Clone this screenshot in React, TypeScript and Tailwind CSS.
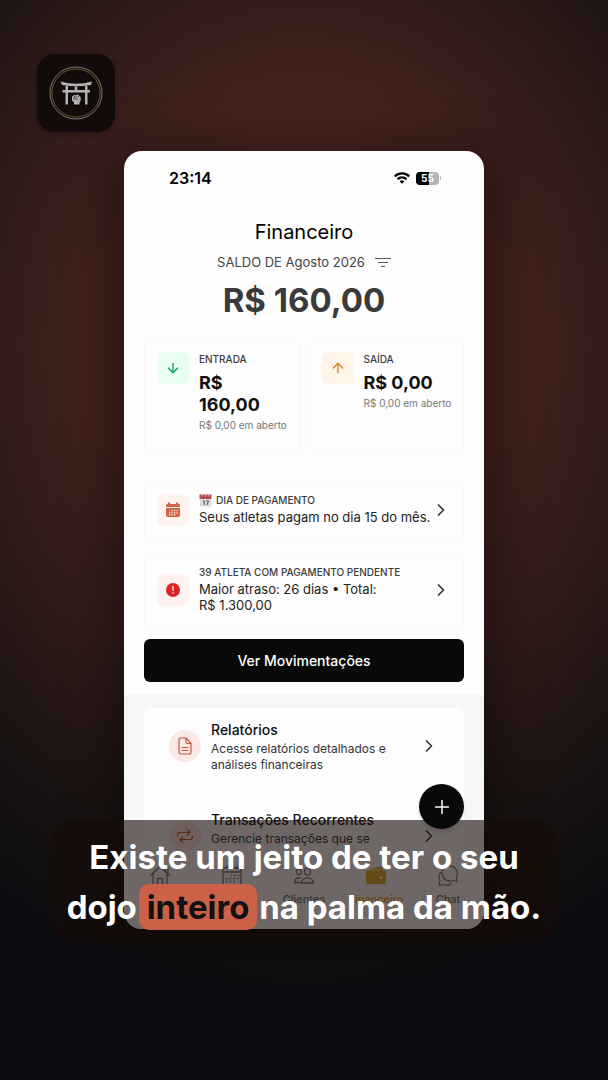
import type { ReactNode } from 'react'
import { ArrowDown, ArrowUp, ChevronRight, Plus } from 'lucide-react'

interface SummaryProps {
  label: string
  value: string
  pending: string
  tone: string
  icon: ReactNode
}

interface NoticeProps {
  label: ReactNode
  text: string
  tone: string
  icon: ReactNode
  spacing: string
}

interface LinkRowProps {
  title: string
  text: string
  icon: ReactNode
}

function Logo() {
  return (
    <svg viewBox="0 0 54 54" className="size-[54px]" fill="none" aria-hidden="true">
      <circle cx="27" cy="27" r="26" stroke="#857b7e" strokeWidth="1" />
      <circle cx="27" cy="27" r="24" stroke="#6b5426" strokeWidth="1" />
      <path d="M11.500 15.500Q27 20 43 15.500L42 19Q27 21.500 13 19Z" fill="#b5b0b1" />
      <path d="M13.500 24h27.500v2.500H13.500zM16.500 20H19v18.500h-2.500zM36 20h2.500v18.500H36zM25.700 20.500h2.600v4.500h-2.600z" fill="#b5b0b1" />
      <path d="M23 30.500 25 29h2l2-.5 1.500 1.500 1.200 1v3.500L30.500 36.500v2h-5.500v-2l-2-2z" fill="#b5b0b1" />
      <path d="M25.200 29.500v2.300M27.200 29.500v2M24 32.800h3.500l1.500 1.500M29.300 30v1.500" stroke="#120b09" strokeWidth=".7" />
    </svg>
  )
}

function WifiIcon() {
  return (
    <svg viewBox="0 0 16 12" className="h-3 w-4" fill="none" stroke="#000" strokeWidth="2.200" aria-hidden="true">
      <path d="M.8 4.400a10.300 10.300 0 0 1 14.400 0M3.500 7.300a6.400 6.400 0 0 1 9 0" />
      <path d="M8 11.800 5.700 9.400a3.300 3.300 0 0 1 4.600 0z" fill="#000" stroke="none" />
    </svg>
  )
}

function Battery() {
  return (
    <div className="flex items-center gap-px">
      <div className="flex h-[13px] w-[23px] items-center justify-center rounded-[4px] bg-linear-to-r from-black from-55% to-[#b5b5b5] to-55% text-[10px] leading-none font-bold text-white">
        55
      </div>
      <div className="h-1 w-px rounded-r bg-[#b5b5b5]" />
    </div>
  )
}

function CalendarSolid() {
  return (
    <svg viewBox="0 0 16 16" className="size-4" fill="#d0644a" aria-hidden="true">
      <path d="M3 .5h2V2h6V.5h2V2h.5A1.500 1.500 0 0 1 15 3.500V5H1V3.500A1.500 1.500 0 0 1 2.500 2H3zM1 6h14v7a2 2 0 0 1-2 2H3a2 2 0 0 1-2-2z" />
      <path d="M6.500 8h1.300v1.300H6.500zM9 8h1.300v1.300H9zM11.500 8h1.300v1.300h-1.300zM4 10.200h1.300v1.300H4zM6.500 10.200h1.300v1.300H6.500zM9 10.200h1.300v1.300H9zM11.500 10.200h1.300v1.300h-1.300zM4 12.300h1.300v1.300H4zM6.500 12.300h1.300v1.300H6.500zM9 12.300h1.300v1.300H9z" fill="#fff0ec" />
    </svg>
  )
}

function CalendarPage() {
  return (
    <svg viewBox="0 0 13 13" className="size-[13px]" aria-hidden="true">
      <path d="M1 1h11v11.500H1z" fill="#d9dadb" />
      <path d="M.5.5h12V5H.5z" fill="#b5494c" />
      <path d="M3 .5v2M6.500.5v2M10 .5v2" stroke="#ecd4d4" strokeWidth=".8" />
      <path d="M4 7h1.200v4M7 7h2.500L8 11" fill="none" stroke="#4a4a4a" strokeWidth="1" />
    </svg>
  )
}

function AlertSolid() {
  return (
    <svg viewBox="0 0 14 14" className="size-[14px]" aria-hidden="true">
      <circle cx="7" cy="7" r="7" fill="#dc2424" />
      <path d="M7 3.400v4" stroke="#fff" strokeWidth="1.200" strokeLinecap="round" />
      <circle cx="7" cy="10" r=".8" fill="#fff" />
    </svg>
  )
}

function ReportIcon() {
  return (
    <svg viewBox="0 0 14 18" className="h-[18px] w-[14px]" fill="none" stroke="#c4543c" strokeWidth="1.200" strokeLinecap="round" strokeLinejoin="round" aria-hidden="true">
      <path d="M3 1h5l5 5.500v8.500a2 2 0 0 1-2 2H3a2 2 0 0 1-2-2V3a2 2 0 0 1 2-2zM8 1v4a1.500 1.500 0 0 0 1.500 1.500H13M4 10.500h6M4 13.500h6" />
    </svg>
  )
}

function RepeatIcon() {
  return (
    <svg viewBox="0 0 18 14" className="h-[14px] w-[18px]" fill="none" stroke="#c4543c" strokeWidth="1.200" strokeLinecap="round" strokeLinejoin="round" aria-hidden="true">
      <path d="M1.500 7V6a2.500 2.500 0 0 1 2.500-2.500h10M11.500 1 14 3.500 11.500 6M16.500 7v1a2.500 2.500 0 0 1-2.500 2.500H4M6.500 8 4 10.500 6.500 13" />
    </svg>
  )
}

function HomeIcon() {
  return (
    <svg viewBox="0 0 22 22" className="size-[22px]" fill="none" stroke="currentColor" strokeWidth="1.300" strokeLinejoin="round" aria-hidden="true">
      <path d="M1 11 11 1.500 21 11M16.500 6.500V3H19v6M4 8.500V20.500h4.500V13.500h5v7H18V8.500" />
    </svg>
  )
}

function AgendaIcon() {
  return (
    <svg viewBox="0 0 22 22" className="size-[22px]" fill="none" stroke="currentColor" strokeWidth="1.300" aria-hidden="true">
      <path d="M2 3h18v18H2zM2 7h18M6 .5V3M16 .5V3" />
      <path d="M9.500 10.500h9M5 13.500h12.500M5 16.500h9" strokeWidth="1.600" strokeDasharray="1.600 2" />
    </svg>
  )
}

function PeopleIcon() {
  return (
    <svg viewBox="0 0 22 22" className="size-[22px]" fill="none" stroke="currentColor" strokeWidth="1.300" strokeLinejoin="round" aria-hidden="true">
      <ellipse cx="14.500" cy="6.500" rx="3" ry="3.600" />
      <ellipse cx="6" cy="7" rx="2.300" ry="2.800" />
      <path d="M8.500 18c0-6.500 12-6.500 12 0zM7.500 17.500H1.500c0-4 3-5.500 6.800-4.300" />
    </svg>
  )
}

function WalletIcon() {
  return (
    <svg viewBox="0 0 22 22" className="size-[22px]" fill="currentColor" aria-hidden="true">
      <path d="M2 4.500 15 1.800a2.500 2.500 0 0 1 3 2.200v.5H4z" />
      <path fillRule="evenodd" d="M3.500 5.300h15A2.500 2.500 0 0 1 21 7.800v9a2.500 2.500 0 0 1-2.500 2.500h-15A2.500 2.500 0 0 1 1 16.800v-9a2.500 2.500 0 0 1 2.500-2.500zM16 11a1.500 1.500 0 1 0 0 3 1.500 1.500 0 0 0 0-3z" />
    </svg>
  )
}

function ChatIcon() {
  return (
    <svg viewBox="0 0 22 22" className="size-[22px]" fill="none" stroke="currentColor" strokeWidth="1.200" strokeLinecap="round" strokeLinejoin="round" aria-hidden="true">
      <path d="M19.300 12.200A7.500 7.500 0 1 0 15.500 15.500l4.500.8z" />
      <path d="M3.800 7.500C1.800 9.800 1.500 13 3 15.500L2.200 20.300l4.600-.8c2.600 1.200 5.200.8 7.200-1" />
    </svg>
  )
}

function SummaryCard({ label, value, pending, tone, icon }: SummaryProps) {
  return (
    <div className="flex h-[116px] gap-[10px] rounded-md border border-[#f8f8f8] p-3">
      <div className={`flex size-8 shrink-0 items-center justify-center rounded-md ${tone}`}>{icon}</div>
      <div className="min-w-0">
        <div className="text-[10px] leading-[14px] font-medium text-[#3c3c3c]">{label}</div>
        <div className="mt-[6px] text-[18px] leading-[22px] font-bold text-[#111]">{value}</div>
        <div className="text-[10px] leading-[18px] whitespace-nowrap text-[#777]">{pending}</div>
      </div>
    </div>
  )
}

function Notice({ label, text, tone, icon, spacing }: NoticeProps) {
  return (
    <a href="#" className={`flex items-center rounded-md border border-[#f8f8f8] px-3 ${spacing}`}>
      <div className={`flex size-8 shrink-0 items-center justify-center rounded-md ${tone}`}>{icon}</div>
      <div className="ml-[10px] flex-1 pb-1">
        <div className="flex items-center gap-1 text-[10px] leading-[18px] font-medium whitespace-nowrap text-[#3c3c3c]">{label}</div>
        <div className="text-[13px] leading-4 text-[#222]">{text}</div>
      </div>
      <ChevronRight className="-ml-3 size-5 shrink-0 text-[#333]" strokeWidth={2} />
    </a>
  )
}

function LinkRow({ title, text, icon }: LinkRowProps) {
  return (
    <a href="#" className="flex h-[90px] items-start px-[25px]">
      <div className="mt-[22px] flex size-8 shrink-0 items-center justify-center rounded-full bg-[#fce8e4]">{icon}</div>
      <div className="mt-3 ml-[10px] w-[190px]">
        <div className="text-[14px] leading-5 font-medium text-[#111]">{title}</div>
        <div className="pt-px text-[12px] leading-4 text-[#333]">{text}</div>
      </div>
      <ChevronRight className="mt-7 ml-auto size-5 shrink-0 text-[#333]" strokeWidth={2} />
    </a>
  )
}

const tabs = [
  { name: 'Início', icon: <HomeIcon />, color: 'text-[#777]', label: '' },
  { name: 'Agenda', icon: <AgendaIcon />, color: 'text-[#777]', label: '' },
  { name: 'Clientes', icon: <PeopleIcon />, color: 'text-[#777]', label: 'Clientes' },
  { name: 'Financeiro', icon: <WalletIcon />, color: 'text-[#e2aa33]', label: 'Financeiro' },
  { name: 'Chat', icon: <ChatIcon />, color: 'text-[#777]', label: 'Chat' },
]

function Phone() {
  return (
    <main className="relative mx-auto mt-[19px] w-full max-w-[360px] overflow-hidden rounded-[18px] bg-[#fdfdfd] shadow-[0_8px_50px_10px_rgba(0,0,0,0.45)]">
      <header className="flex items-center justify-between pt-[17px] pr-[43px] pl-[45px]">
        <div className="text-[16px] leading-5 font-semibold text-black">23:14</div>
        <div className="flex items-center gap-[6px]">
          <WifiIcon />
          <Battery />
        </div>
      </header>

      <section className="px-5 pt-7 pb-[13px]">
        <h1 className="text-center text-[20px] leading-8 text-black">Financeiro</h1>
        <div className="flex items-center justify-center gap-[10px] text-[13px] leading-7 text-[#444]">
          SALDO DE Agosto 2026
          <button aria-label="Filtrar" className="flex">
            <svg viewBox="0 0 16 10" className="h-[10px] w-4" stroke="#555" strokeWidth="1.200" aria-hidden="true">
              <path d="M0 1.500h16M3 5.500h10M6 9.500h4" />
            </svg>
          </button>
        </div>
        <div className="text-center text-[33px] leading-[48px] font-bold text-[#3a3a3a]">R$ 160,00</div>

        <div className="mt-[15px] grid grid-cols-2 gap-[9px]">
          <SummaryCard
            label="ENTRADA"
            value="R$ 160,00"
            pending="R$ 0,00 em aberto"
            tone="bg-[#e9fdf2]"
            icon={<ArrowDown className="size-4 text-[#0f9f6e]" />}
          />
          <SummaryCard
            label="SAÍDA"
            value="R$ 0,00"
            pending="R$ 0,00 em aberto"
            tone="bg-[#fff4e8]"
            icon={<ArrowUp className="size-4 text-[#d5831a]" />}
          />
        </div>

        <div className="mt-[25px] grid gap-[13px]">
          <Notice
            label={<><CalendarPage />DIA DE PAGAMENTO</>}
            text="Seus atletas pagam no dia 15 do mês."
            tone="bg-[#fff3f0]"
            icon={<CalendarSolid />}
            spacing="h-[60px]"
          />
          <Notice
            label="39 ATLETA COM PAGAMENTO PENDENTE"
            text={'Maior atraso: 26 dias • Total: R$\u00a01.300,00'}
            tone="bg-[#fff1ef]"
            icon={<AlertSolid />}
            spacing="h-[74px]"
          />
        </div>

        <button className="mt-3 block h-[43px] w-full rounded-md bg-[#090909] text-[14px] font-medium text-white">
          Ver Movimentações
        </button>
      </section>

      <section className="bg-[#f6f6f6] px-5 pt-[13px]">
        <div className="h-[148px] overflow-hidden rounded-t-md bg-[#fdfdfd]">
          <LinkRow
            title="Relatórios"
            text="Acesse relatórios detalhados e análises financeiras"
            icon={<ReportIcon />}
          />
          <LinkRow title="Transações Recorrentes" text="Gerencie transações que se" icon={<RepeatIcon />} />
        </div>
      </section>

      <nav className="grid h-[73px] grid-cols-5 bg-[#fdfdfd] pt-[9px]">
        {tabs.map((tab) => (
          <a key={tab.name} href="#" aria-label={tab.name} className={`flex flex-col items-center ${tab.color}`}>
            {tab.icon}
            <span className="text-[11px] leading-6 font-medium">{tab.label}</span>
          </a>
        ))}
      </nav>
    </main>
  )
}

export default function App() {
  return (
    <div className="min-h-screen bg-[#0a0c10] bg-[radial-gradient(ellipse_92%_62%_at_50%_32%,#5c2c24_0%,#42221d_38%,#321c19_56%,#1d1413_76%,#0a0c10_100%)] px-[37px] pt-[54px] pb-[137px] font-[Inter,'Liberation_Sans',sans-serif]">
      <div className="flex size-[78px] items-center justify-center rounded-[18px] bg-[#120b0a] shadow-[0_2px_6px_rgba(0,0,0,0.3)]">
        <Logo />
      </div>

      <div className="relative">
        <Phone />
        <div className="absolute inset-x-[13px] -bottom-[14px] rounded-3xl bg-[#170b08]/62 pt-3 pb-[11px] text-center text-[33px] leading-[50px] font-bold whitespace-nowrap text-white">
          <p>Existe um jeito de ter o seu</p>
          <p>
            dojo <mark className="-mx-[6px] rounded-[10px] bg-[#cd6148] px-2 py-[3px] text-[#111]">inteiro</mark> na palma da mão.
          </p>
        </div>
        <div className="pointer-events-none absolute inset-x-0 bottom-[100px] mx-auto flex max-w-[360px] justify-end px-5">
          <button
            aria-label="Adicionar"
            className="pointer-events-auto flex size-[45px] items-center justify-center rounded-full bg-[#090909] text-white shadow-md"
          >
            <Plus className="size-[22px]" strokeWidth={1.6} />
          </button>
        </div>
      </div>
    </div>
  )
}
